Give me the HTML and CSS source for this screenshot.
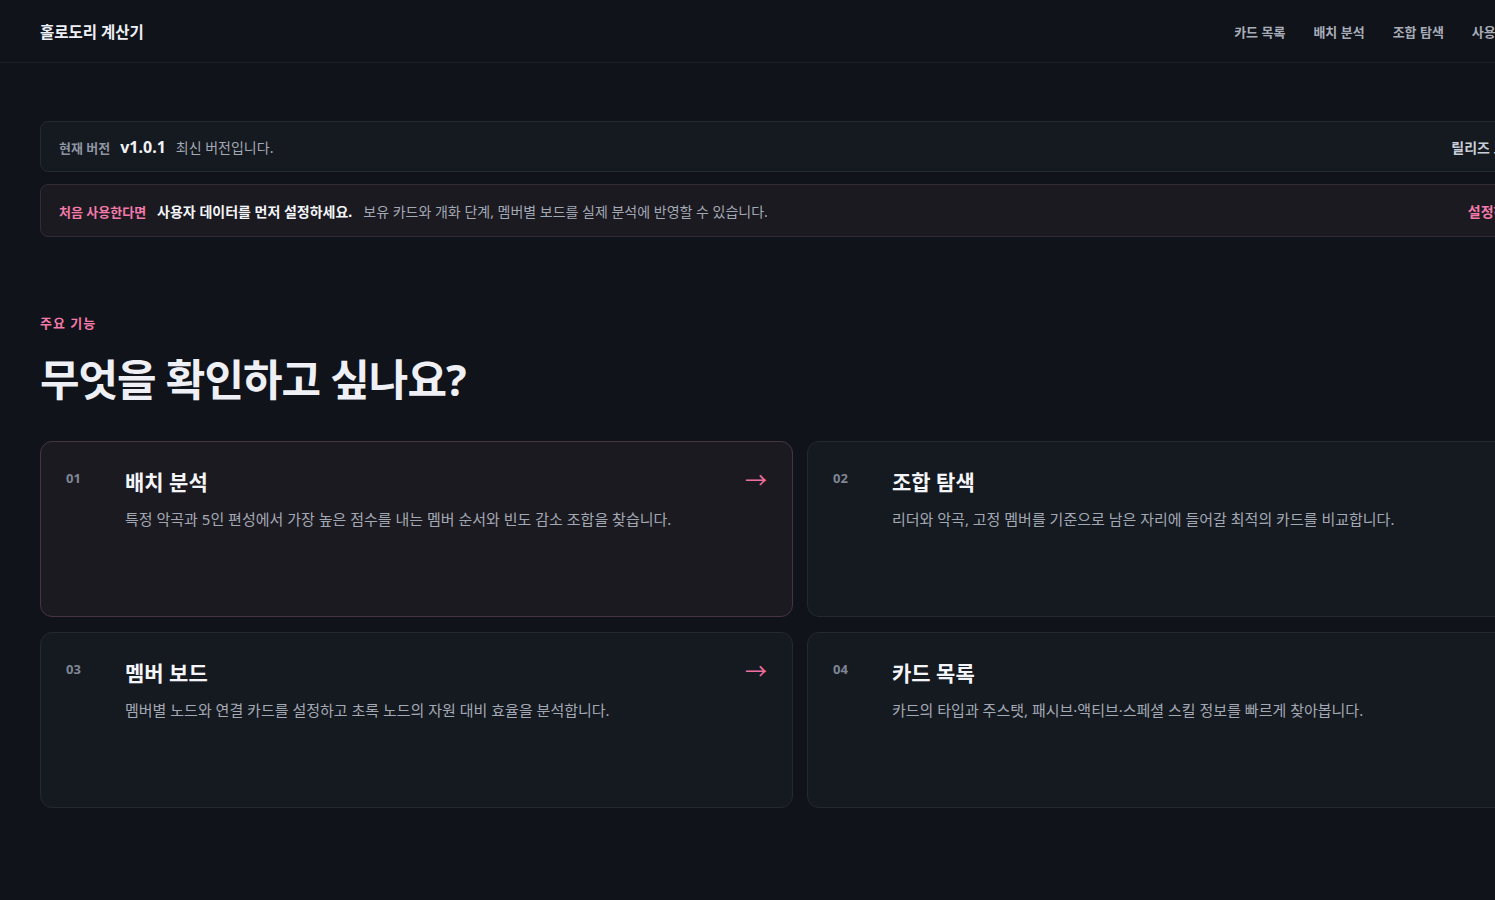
FILE: index.html
```html
<!DOCTYPE html>
<html lang="ko">
<head>
  <meta charset="UTF-8">
  <meta name="viewport" content="width=device-width, initial-scale=1.0">
  <title>홀로도리 계산기</title>
  <link rel="stylesheet" href="styles.css">
</head>
<body>
  <div class="page">
    <header class="topbar">
      <div class="brand">홀로도리 계산기</div>
      <nav class="nav">
        <a href="#">카드 목록</a>
        <a href="#">배치 분석</a>
        <a href="#">조합 탐색</a>
        <a href="#">사용자 데이터</a>
      </nav>
    </header>

    <main class="main">
      <!-- 버전 안내 -->
      <div class="notice notice-version">
        <div class="notice-text">
          <span class="label">현재 버전</span>
          <strong class="version">v1.0.1</strong>
          <span class="muted">최신 버전입니다.</span>
        </div>
        <a class="notice-link" href="#">릴리즈 노트 →</a>
      </div>

      <!-- 처음 사용자 안내 -->
      <div class="notice notice-setup">
        <div class="notice-text">
          <span class="label pink">처음 사용한다면</span>
          <strong class="strong">사용자 데이터를 먼저 설정하세요.</strong>
          <span class="muted">보유 카드와 개화 단계, 멤버별 보드를 실제 분석에 반영할 수 있습니다.</span>
        </div>
        <a class="notice-link pink" href="#">설정하기 →</a>
      </div>

      <section class="features">
        <div class="eyebrow">주요 기능</div>
        <h2>무엇을 확인하고 싶나요?</h2>

        <div class="feature-grid">
          <a class="feature active" href="#">
            <span class="num">01</span>
            <div class="feature-body">
              <h3>배치 분석</h3>
              <p>특정 악곡과 5인 편성에서 가장 높은 점수를 내는 멤버 순서와 빈도 감소 조합을 찾습니다.</p>
            </div>
            <span class="arrow">→</span>
          </a>
          <a class="feature" href="#">
            <span class="num">02</span>
            <div class="feature-body">
              <h3>조합 탐색</h3>
              <p>리더와 악곡, 고정 멤버를 기준으로 남은 자리에 들어갈 최적의 카드를 비교합니다.</p>
            </div>
            <span class="arrow">→</span>
          </a>
          <a class="feature" href="#">
            <span class="num">03</span>
            <div class="feature-body">
              <h3>멤버 보드</h3>
              <p>멤버별 노드와 연결 카드를 설정하고 초록 노드의 자원 대비 효율을 분석합니다.</p>
            </div>
            <span class="arrow">→</span>
          </a>
          <a class="feature" href="#">
            <span class="num">04</span>
            <div class="feature-body">
              <h3>카드 목록</h3>
              <p>카드의 타입과 주스탯, 패시브·액티브·스페셜 스킬 정보를 빠르게 찾아봅니다.</p>
            </div>
            <span class="arrow">→</span>
          </a>
        </div>
      </section>
    </main>
  </div>
</body>
</html>
```

FILE: styles.css
```css
html, body {
  overflow-x: hidden;
}

body {
  margin: 0;
  background-color: #10131a;
  color: #e8eaf0;
  font-family: "Noto Sans", "Noto Sans CJK KR", sans-serif;
}

a {
  color: inherit;
  text-decoration: none;
}

.page {
  width: 1600px;
}

.topbar {
  display: flex;
  justify-content: space-between;
  align-items: center;
  height: 62px;
  padding: 0 40px;
  border-bottom: 1px solid #1d212a;
}

.brand {
  font-size: 15.5px;
  font-weight: 700;
  color: #eef0f5;
}

.nav {
  display: flex;
  gap: 28px;
  padding-right: 13px;
}

.nav a {
  font-size: 13px;
  font-weight: 700;
  color: #a7adb8;
}

.main {
  padding: 58px 40px 80px;
}

.notice {
  display: flex;
  justify-content: space-between;
  align-items: center;
  padding: 0 22px 0 18px;
  border-radius: 8px;
  box-sizing: border-box;
}

.notice-version {
  height: 51px;
  background-color: #151920;
  border: 1px solid #232833;
}

.notice-setup {
  height: 53px;
  margin-top: 12px;
  background-color: #1b1a21;
  border: 1px solid #332b35;
}

.notice-text {
  display: flex;
  align-items: baseline;
  gap: 10px;
}

.notice-setup .notice-text {
  gap: 11px;
}

.label {
  font-size: 13px;
  font-weight: 700;
  color: #8e95a2;
}

.pink {
  color: #f37aa9;
}

.version {
  font-size: 16px;
  font-weight: 700;
  color: #f1f3f7;
}

.strong {
  font-size: 14px;
  font-weight: 700;
  color: #f4f5f8;
}

.muted {
  font-size: 14px;
  color: #a3a9b4;
}

.notice-link {
  font-size: 14px;
  font-weight: 700;
  color: #c9ced7;
}

.notice-link.pink {
  color: #f37aa9;
}

.features {
  margin-top: 76px;
}

.eyebrow {
  font-size: 13px;
  font-weight: 700;
  color: #f37aa9;
  letter-spacing: 1px;
}

.features h2 {
  margin: 20px 0 33px;
  font-size: 43px;
  font-weight: 700;
  letter-spacing: -1px;
  color: #eef0f5;
  line-height: 1.3;
}

.feature-grid {
  display: grid;
  grid-template-columns: 1fr 1fr;
  gap: 15px 14px;
}

.feature {
  display: grid;
  grid-template-columns: 59px 1fr auto;
  align-items: start;
  height: 176px;
  padding: 26px 25px 0 25px;
  box-sizing: border-box;
  background-color: #151920;
  border: 1px solid #232833;
  border-radius: 12px;
}

.feature.active {
  background-color: #1c1a21;
  border-color: #473443;
}

.num {
  padding-top: 1px;
  font-size: 13px;
  font-weight: 700;
  color: #7f8694;
}

.feature h3 {
  margin: 0;
  font-size: 21px;
  font-weight: 700;
  color: #f4f5f8;
  line-height: 1.4;
}

.feature p {
  margin: 11px 0 0;
  font-size: 15px;
  color: #a3a9b4;
  line-height: 1.5;
}

.arrow {
  font-size: 22px;
  line-height: 1;
  color: #ee6f9f;
}
```
